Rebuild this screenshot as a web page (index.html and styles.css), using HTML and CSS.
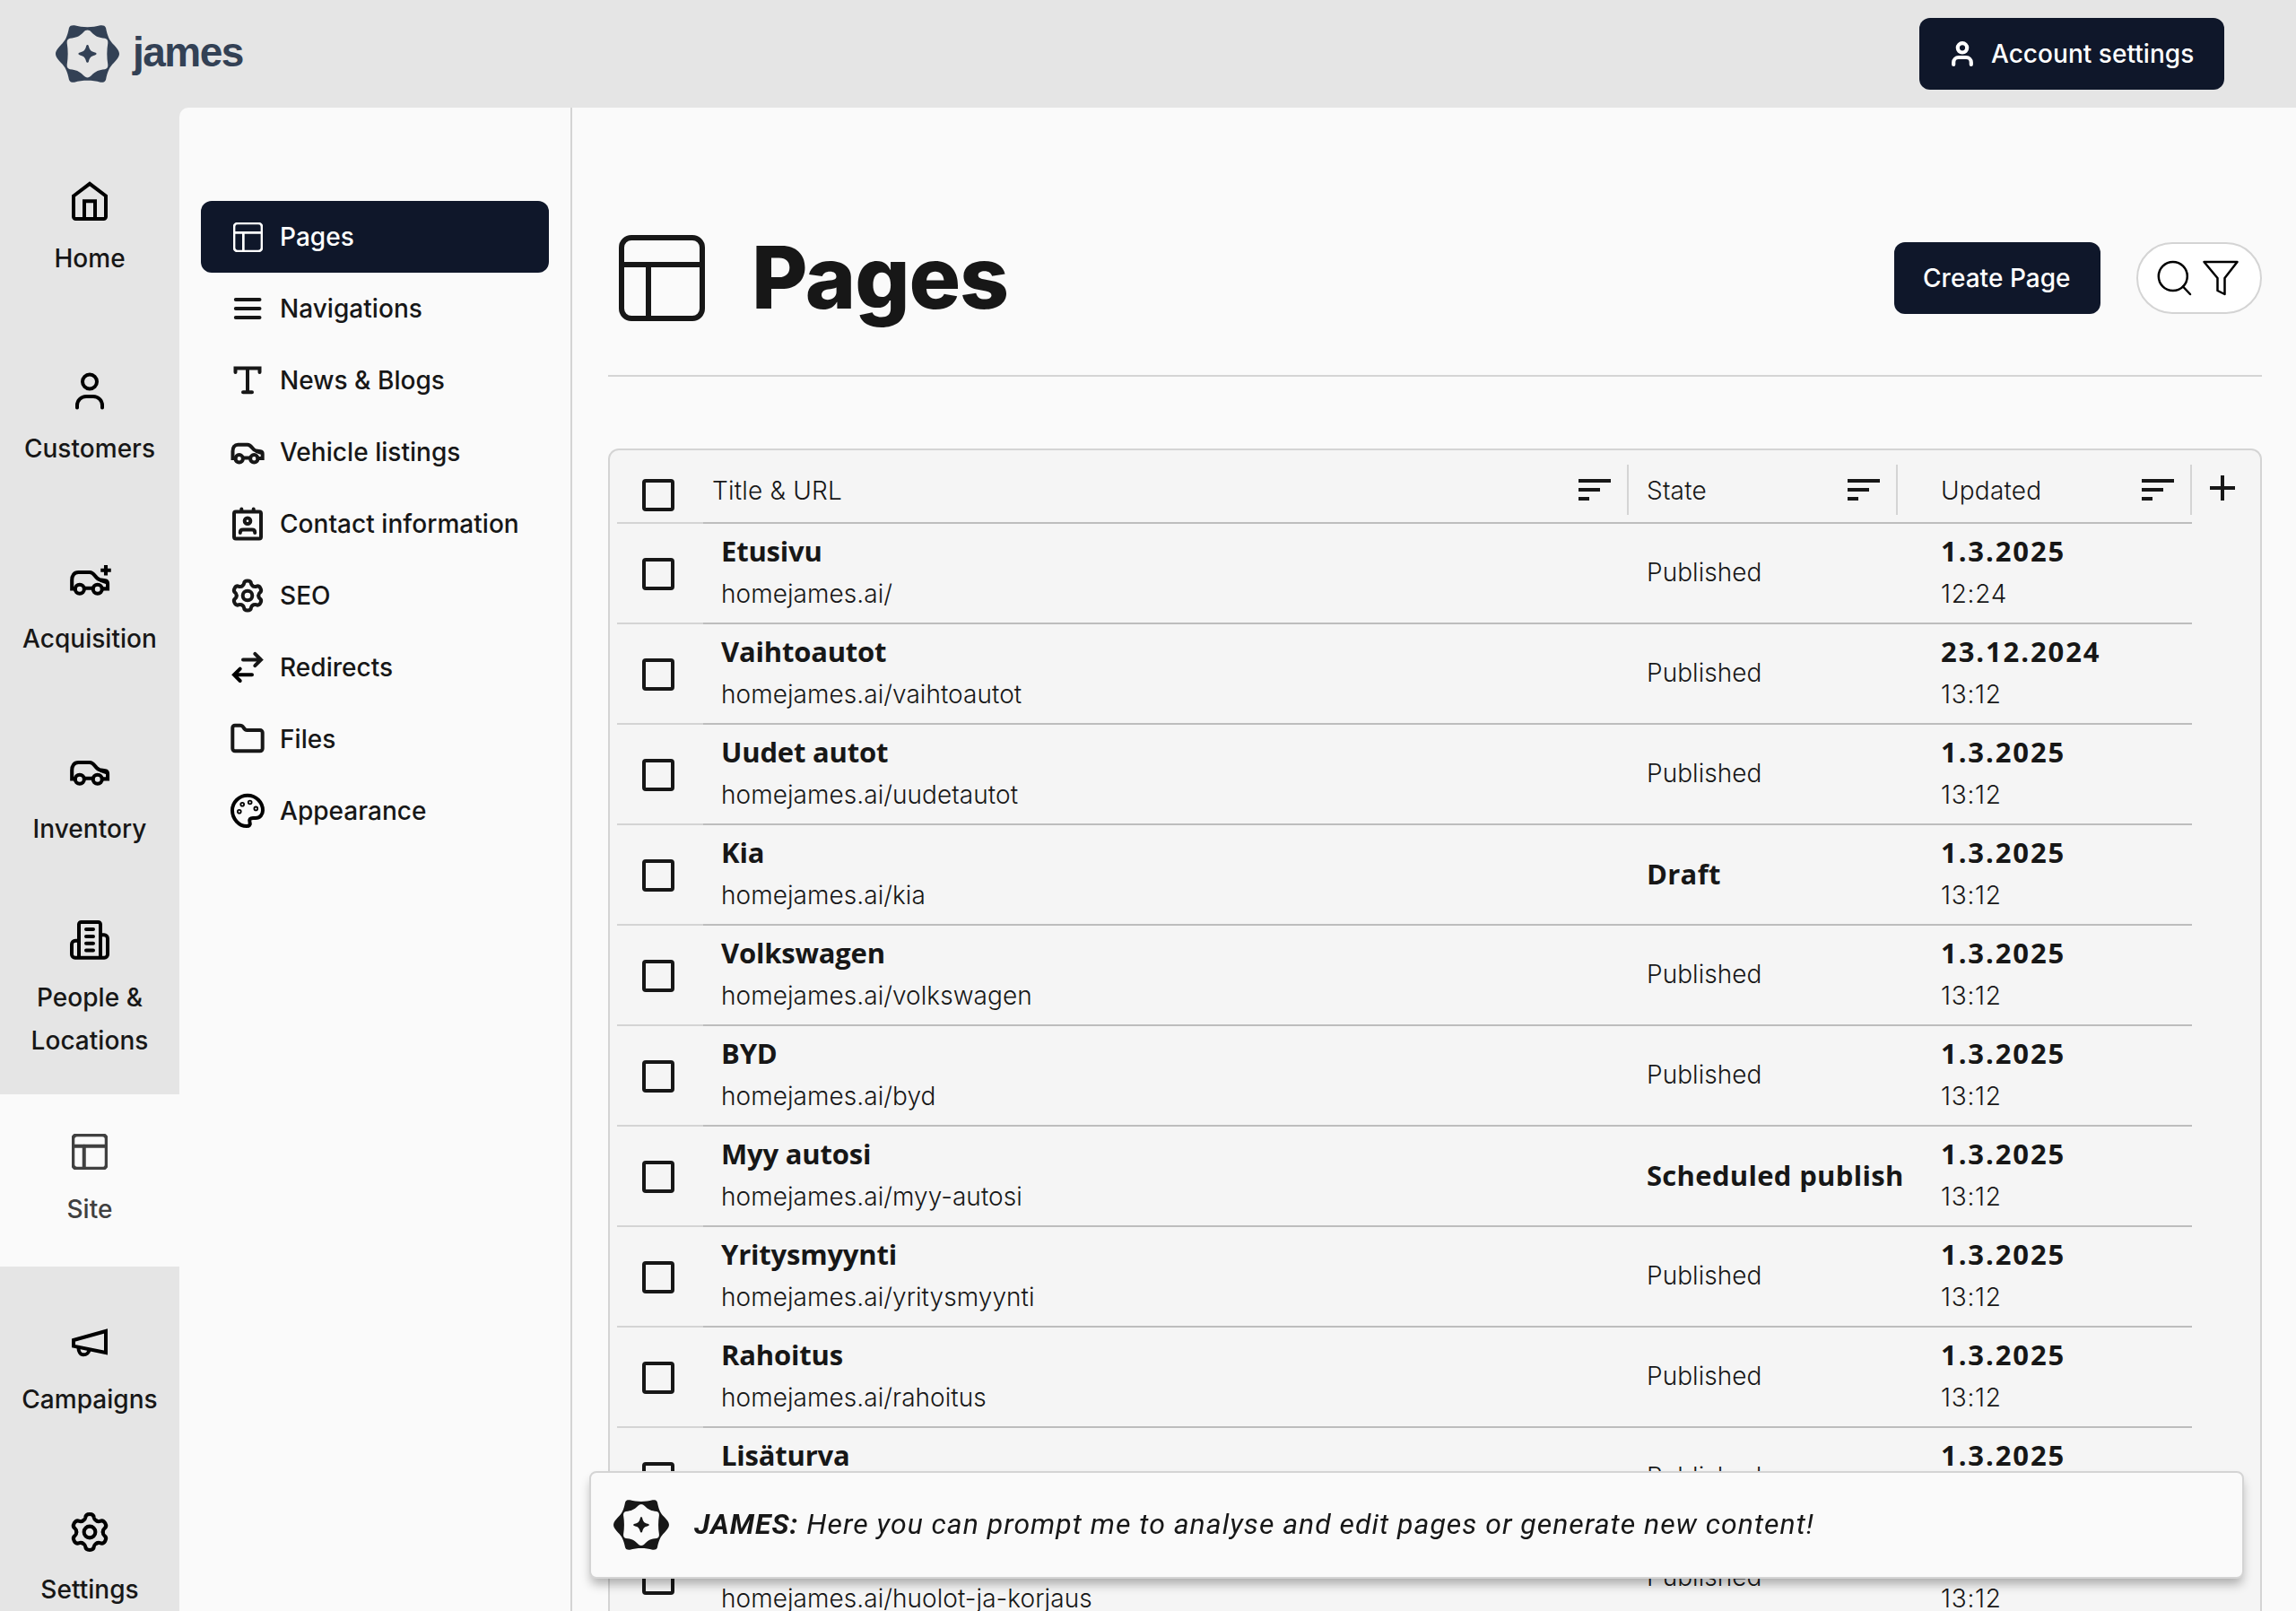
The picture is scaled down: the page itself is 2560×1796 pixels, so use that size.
FILE: index.html
```html
<!DOCTYPE html>
<html lang="en">
<head>
    <meta charset="UTF-8">
    <meta name="viewport" content="width=device-width, initial-scale=1.0">
    <title>James - Pages</title>
    <link rel="stylesheet" href="styles.css">
</head>
<body>

    <!-- Icon sprite -->
    <svg class="sprite" xmlns="http://www.w3.org/2000/svg">
        <symbol id="logo" viewBox="0 0 71 64">
            <path fill-rule="evenodd" d="M15 3C16 .5 18 0 21 .3C30 2.8 41 2.8 50 .3C53 0 55 .5 56 3C58 13 60 17 65 22C68 25.5 71 28.5 71 32C71 35.5 68 38.5 65 42C60 47 58 51 56 61C55 63.5 53 64 50 63.7C41 61.2 30 61.2 21 63.7C18 64 16 63.5 15 61C13 51 11 47 6 42C3 38.5 0 35.5 0 32C0 28.5 3 25.5 6 22C11 17 13 13 15 3ZM31 8C26 13 23 14 16 14.8C13.5 15.5 12.5 17 12.7 20C14 28 14 36 12.7 44C12.5 47 13.5 48.5 16 49.2C23 50 26 51 31 56C34 59.2 37 59.2 40 56C45 51 48 50 55 49.2C57.5 48.5 58.5 47 58.3 44C57 36 57 28 58.3 20C58.5 17 57.5 15.5 55 14.8C48 14 45 13 40 8C37 4.8 34 4.8 31 8Z"/>
            <path d="M35.5 22C36.3 22 36.7 22.6 36.9 23.6C38 28 39.5 29.5 43.9 30.6C46.2 31.2 46.2 32.8 43.9 33.4C39.5 34.5 38 36 36.9 40.4C36.5 42.3 34.5 42.3 34.1 40.4C33 36 31.5 34.5 27.1 33.4C24.8 32.8 24.8 31.2 27.1 30.6C31.5 29.5 33 28 34.1 23.6C34.3 22.6 34.7 22 35.5 22Z"/>
        </symbol>
        <symbol id="home" viewBox="0 0 48 48">
            <path d="M6 18.5L24 4.8L42 18.5V41.5A2.5 2.5 0 0 1 39.500 44H8.500A2.500 2.500 0 0 1 6 41.500Z"/>
            <path d="M18 44V24.300H30V44"/>
        </symbol>
        <symbol id="user" viewBox="0 0 48 48">
            <circle cx="24" cy="13.500" r="8"/>
            <path d="M10 42.500V40A10 10 0 0 1 20 30H28A10 10 0 0 1 38 40V42.500"/>
        </symbol>
        <symbol id="car" viewBox="0 0 40 40">
            <path d="M6.500 27H3.500V19C3.500 14.500 5.500 11.700 9.500 11.700H20C22.500 11.700 23.500 13 25 15C26.500 17 27.500 18.200 29.500 18.600L34.500 19.300C36.500 19.600 36.700 20.500 36.700 22V27H31.500M15 26.500H23M30 19L36 21"/>
            <circle cx="10.700" cy="27.300" r="4.200"/>
            <circle cx="27.300" cy="27.300" r="4.200"/>
        </symbol>
        <symbol id="building" viewBox="0 0 48 48">
            <path d="M12 43.700V6.500A2.500 2.500 0 0 1 14.500 4H33.500A2.500 2.500 0 0 1 36 6.500V43.700M12 24.700H8A4 4 0 0 0 4 28.700V40A3.700 3.700 0 0 0 7.700 43.700H40.300A3.700 3.700 0 0 0 44 40V22.300A4 4 0 0 0 40 18.300H36"/>
            <path d="M20 12H28M20 20H28M20 27.700H28M20 35.500H28"/>
        </symbol>
        <symbol id="layout" viewBox="0 0 96 96">
            <path d="M3 33H93"/>
            <rect x="3" y="3" width="90" height="90" rx="11"/>
            <path class="layout-stem" d="M33 33V93"/>
        </symbol>
        <symbol id="megaphone" viewBox="0 0 48 48">
            <path d="M6 22L42 12V36L6 28.700Z"/>
            <path d="M11.500 30.500C11.500 34.500 13.500 38.300 17 38.300C20.500 38.300 23 36 23.500 33"/>
        </symbol>
        <path id="tooth" d="M-6.200 -10.600C-4.700 -11.400 -4.200 -12 -4 -13.400C-3.800 -15.700 -2.700 -16.600 0 -16.600S3.800 -15.700 4 -13.400C4.200 -12 4.700 -11.400 6.200 -10.600"/>
        <symbol id="cog" viewBox="-20 -20 40 40">
            <use href="#tooth"/>
            <use href="#tooth" transform="rotate(60)"/>
            <use href="#tooth" transform="rotate(120)"/>
            <use href="#tooth" transform="rotate(180)"/>
            <use href="#tooth" transform="rotate(240)"/>
            <use href="#tooth" transform="rotate(300)"/>
            <circle r="5.300"/>
        </symbol>
        <symbol id="sort" viewBox="0 0 36 24">
            <path d="M0 2H36M0 12H24M0 22H12"/>
        </symbol>
    </svg>

    <header class="topbar">
        <a class="brand" href="#">
            <svg class="brand-mark"><use href="#logo"/></svg>
            <span class="brand-name">james</span>
        </a>
        <button class="btn btn-account">
            <svg class="icon-account" viewBox="0 0 24 28">
                <circle cx="12" cy="7.300" r="5.200"/>
                <path d="M2.200 26V23.500A5.500 5.500 0 0 1 7.700 18H16.300A5.500 5.500 0 0 1 21.800 23.500V26"/>
            </svg>
            Account settings
        </button>
    </header>

    <div class="layout">
        <nav class="sidebar">
            <a class="side-item" href="#"><svg class="icon"><use href="#home"/></svg>Home</a>
            <a class="side-item" href="#"><svg class="icon"><use href="#user"/></svg>Customers</a>
            <a class="side-item" href="#">
                <svg class="icon icon-car" viewBox="0 0 40 40"><use href="#car"/><path class="plus" d="M35 5V14.600M30.200 9.800H39.800"/></svg>
                Acquisition
            </a>
            <a class="side-item" href="#"><svg class="icon icon-car"><use href="#car"/></svg>Inventory</a>
            <a class="side-item side-item-tall" href="#"><svg class="icon"><use href="#building"/></svg>People &amp;<br>Locations</a>
            <a class="side-item active" href="#"><svg class="icon icon-site"><use href="#layout"/></svg>Site</a>
            <a class="side-item" href="#"><svg class="icon"><use href="#megaphone"/></svg>Campaigns</a>
            <a class="side-item" href="#"><svg class="icon icon-car"><use href="#cog"/></svg>Settings</a>
        </nav>

        <div class="content">
            <nav class="submenu">
                <a class="sub-item active" href="#"><svg class="icon icon-pages"><use href="#layout"/></svg>Pages</a>
                <a class="sub-item" href="#">
                    <svg class="icon" viewBox="0 0 40 40"><path d="M6.800 10H33.500M6.800 20H33.500M6.800 30H33.500"/></svg>
                    Navigations
                </a>
                <a class="sub-item" href="#">
                    <svg class="icon" viewBox="0 0 40 40"><path d="M6.500 11V6.500H33.500V11M20 6.500V33.300M15 33.300H25"/></svg>
                    News &amp; Blogs
                </a>
                <a class="sub-item" href="#"><svg class="icon"><use href="#car"/></svg>Vehicle listings</a>
                <a class="sub-item" href="#">
                    <svg class="icon" viewBox="0 0 40 40">
                        <rect x="5" y="6.500" width="30" height="30" rx="2"/>
                        <path d="M13.300 3.500V6M26.700 3.500V6M11.800 30V29.500C11.800 27.500 13 26.500 15 26.500H25C27 26.500 28.200 27.500 28.200 29.500V30"/>
                        <circle cx="20" cy="16.700" r="3.300"/>
                    </svg>
                    Contact information
                </a>
                <a class="sub-item" href="#"><svg class="icon"><use href="#cog"/></svg>SEO</a>
                <a class="sub-item" href="#">
                    <svg class="icon" viewBox="0 0 40 40">
                        <path d="M15 11.500H35M28.300 4.800L35 11.500L28.300 18.200"/>
                        <path class="ink-black" d="M25 28.300H5M11.700 21.600L5 28.300L11.700 35"/>
                    </svg>
                    Redirects
                </a>
                <a class="sub-item" href="#">
                    <svg class="icon" viewBox="0 0 40 40"><path d="M3.300 7.300A2.600 2.600 0 0 1 5.900 4.700H11.500C13.500 4.700 14.500 5.500 15.500 7C16.500 9 17.500 10 19.500 10H34A2.700 2.700 0 0 1 36.700 12.700V30.600A2.700 2.700 0 0 1 34 33.300H6A2.700 2.700 0 0 1 3.300 30.600Z"/></svg>
                    Files
                </a>
                <a class="sub-item" href="#">
                    <svg class="icon ink-black" viewBox="0 0 40 40">
                        <path d="M20 2.800C10.500 2.800 3 10.500 3 19.500C3 29 10.500 37 19 37C22 37 23.500 35.500 22.500 32.500C21.500 29.500 23 28 26 28H29C34 28 37 24 37 19.500C37 10.500 29.500 2.800 20 2.800Z"/>
                        <g class="palette-dots">
                            <circle cx="10.800" cy="20.700" r="1.900"/>
                            <circle cx="14.200" cy="12.700" r="1.900"/>
                            <circle cx="22.700" cy="10.500" r="1.900"/>
                            <circle cx="29.300" cy="17.400" r="1.900"/>
                        </g>
                    </svg>
                    Appearance
                </a>
            </nav>

            <main class="main">
                <div class="page-head">
                    <svg class="page-icon"><use href="#layout"/></svg>
                    <h1>Pages</h1>
                    <button class="btn btn-create">Create Page</button>
                    <div class="tools">
                        <svg class="tool" viewBox="0 0 40 40"><circle cx="16.800" cy="18" r="16"/><path d="M28 29.500L36 38"/></svg>
                        <svg class="tool" viewBox="0 0 40 40"><path d="M1.500 2H38.500L24.500 20V38L16.500 34V20Z"/></svg>
                    </div>
                </div>

                <div class="table">
                    <div class="row row-head">
                        <span class="cell cell-check"><i class="checkbox"></i></span>
                        <span class="cell cell-title">Title &amp; URL <svg class="sort"><use href="#sort"/></svg></span>
                        <span class="cell cell-state">State <svg class="sort"><use href="#sort"/></svg></span>
                        <span class="cell cell-date">Updated <svg class="sort"><use href="#sort"/></svg></span>
                        <svg class="add" viewBox="0 0 28 28"><path d="M14 0V28M0 14H28"/></svg>
                    </div>
                    <div class="row">
                        <span class="cell cell-check"><i class="checkbox"></i></span>
                        <span class="cell cell-title"><b>Etusivu</b>homejames.ai/</span>
                        <span class="cell cell-state">Published</span>
                        <span class="cell cell-date"><b>1.3.2025</b>12:24</span>
                    </div>
                    <div class="row">
                        <span class="cell cell-check"><i class="checkbox"></i></span>
                        <span class="cell cell-title"><b>Vaihtoautot</b>homejames.ai/vaihtoautot</span>
                        <span class="cell cell-state">Published</span>
                        <span class="cell cell-date"><b>23.12.2024</b>13:12</span>
                    </div>
                    <div class="row">
                        <span class="cell cell-check"><i class="checkbox"></i></span>
                        <span class="cell cell-title"><b>Uudet autot</b>homejames.ai/uudetautot</span>
                        <span class="cell cell-state">Published</span>
                        <span class="cell cell-date"><b>1.3.2025</b>13:12</span>
                    </div>
                    <div class="row">
                        <span class="cell cell-check"><i class="checkbox"></i></span>
                        <span class="cell cell-title"><b>Kia</b>homejames.ai/kia</span>
                        <span class="cell cell-state"><b>Draft</b></span>
                        <span class="cell cell-date"><b>1.3.2025</b>13:12</span>
                    </div>
                    <div class="row">
                        <span class="cell cell-check"><i class="checkbox"></i></span>
                        <span class="cell cell-title"><b>Volkswagen</b>homejames.ai/volkswagen</span>
                        <span class="cell cell-state">Published</span>
                        <span class="cell cell-date"><b>1.3.2025</b>13:12</span>
                    </div>
                    <div class="row">
                        <span class="cell cell-check"><i class="checkbox"></i></span>
                        <span class="cell cell-title"><b>BYD</b>homejames.ai/byd</span>
                        <span class="cell cell-state">Published</span>
                        <span class="cell cell-date"><b>1.3.2025</b>13:12</span>
                    </div>
                    <div class="row">
                        <span class="cell cell-check"><i class="checkbox"></i></span>
                        <span class="cell cell-title"><b>Myy autosi</b>homejames.ai/myy-autosi</span>
                        <span class="cell cell-state"><b>Scheduled publish</b></span>
                        <span class="cell cell-date"><b>1.3.2025</b>13:12</span>
                    </div>
                    <div class="row">
                        <span class="cell cell-check"><i class="checkbox"></i></span>
                        <span class="cell cell-title"><b>Yritysmyynti</b>homejames.ai/yritysmyynti</span>
                        <span class="cell cell-state">Published</span>
                        <span class="cell cell-date"><b>1.3.2025</b>13:12</span>
                    </div>
                    <div class="row">
                        <span class="cell cell-check"><i class="checkbox"></i></span>
                        <span class="cell cell-title"><b>Rahoitus</b>homejames.ai/rahoitus</span>
                        <span class="cell cell-state">Published</span>
                        <span class="cell cell-date"><b>1.3.2025</b>13:12</span>
                    </div>
                    <div class="row">
                        <span class="cell cell-check"><i class="checkbox"></i></span>
                        <span class="cell cell-title"><b>Lisäturva</b>homejames.ai/lisaturva</span>
                        <span class="cell cell-state">Published</span>
                        <span class="cell cell-date"><b>1.3.2025</b>13:12</span>
                    </div>
                    <div class="row">
                        <span class="cell cell-check"><i class="checkbox"></i></span>
                        <span class="cell cell-title"><b>Huolto ja korjaus</b>homejames.ai/huolot-ja-korjaus</span>
                        <span class="cell cell-state">Published</span>
                        <span class="cell cell-date"><b>1.3.2025</b>13:12</span>
                    </div>
                </div>
            </main>
        </div>
    </div>

    <!-- Assistant prompt, floats over the table -->
    <div class="prompt">
        <svg class="prompt-logo"><use href="#logo"/></svg>
        <p><strong>JAMES:</strong> Here you can prompt me to analyse and edit pages or generate new content!</p>
    </div>

</body>
</html>
```

FILE: styles.css
```css
:root {
    --ink: #171717;
    --navy: #0f172a;
    --slate: #334155;
    --chrome: #e5e5e5;
    --surface: #fafafa;
    --table-bg: #f5f5f5;
    --line: #d4d4d4;
    --line-dark: #bdbdbd;
}

* {
    box-sizing: border-box;
}

body {
    margin: 0;
    height: 100vh;
    overflow: hidden;
    font-family: Inter, "Liberation Sans", sans-serif;
    font-size: 28px;
    font-weight: 500;
    letter-spacing: 0.04px;
    color: var(--ink);
    background-color: var(--chrome);
}

a {
    color: inherit;
    text-decoration: none;
}

svg {
    flex: none;
    fill: none;
    stroke: currentColor;
    stroke-width: 4;
    stroke-linecap: round;
    overflow: visible;
}

.sprite {
    position: absolute;
    width: 0;
    height: 0;
}

.ink-black {
    stroke: #000;
}

/* Top bar */
.topbar {
    display: flex;
    justify-content: space-between;
    align-items: center;
    height: 120px;
    padding: 0 80px 0 62px;
}

.brand {
    display: flex;
    align-items: center;
    gap: 15px;
    color: var(--slate);
}

.brand-mark {
    width: 71px;
    height: 64px;
    fill: currentColor;
    stroke: none;
}

.brand-name {
    font-family: "Liberation Sans", Arial, sans-serif;
    font-size: 46px;
    font-weight: bold;
    letter-spacing: -1.5px;
    line-height: 64px;
    margin-top: -5px;
}

.btn {
    display: flex;
    align-items: center;
    height: 80px;
    border: none;
    border-radius: 12px;
    background-color: var(--navy);
    color: #fff;
    font: inherit;
    letter-spacing: inherit;
    white-space: nowrap;
}

.btn-account {
    width: 340px;
    padding: 0 0 0 36px;
    gap: 20px;
}

.icon-account {
    width: 24px;
    height: 28px;
    stroke-width: 4.2;
}

/* Left navigation */
.layout {
    display: flex;
    height: calc(100vh - 120px);
}

.sidebar {
    flex: none;
    display: flex;
    flex-direction: column;
    gap: 20px;
    width: 200px;
    padding-top: 40px;
    overflow: hidden;
}

.side-item {
    flex: none;
    display: flex;
    flex-direction: column;
    align-items: center;
    height: 192px;
    padding-top: 40px;
    line-height: 48px;
    text-align: center;
}

.side-item .icon {
    width: 48px;
    height: 48px;
    margin-bottom: 16px;
    color: #000;
}

.side-item .icon-car {
    stroke-width: 3.4;
}

.side-item .plus {
    stroke-linecap: butt;
}

.side-item-tall {
    display: block;
    padding-top: 16px;
}

.side-item-tall .icon {
    display: block;
    margin: 0 auto 16px;
}

.side-item.active {
    background-color: var(--surface);
    color: #404040;
}

.side-item .icon-site {
    width: 40px;
    height: 40px;
    margin: 4px 0 20px;
    color: #404040;
    stroke-width: 9.6;
}

.icon-site .layout-stem {
    stroke: #000;
}

/* Content area */
.content {
    flex: 1;
    display: flex;
    min-width: 0;
    background-color: var(--surface);
    border-top-left-radius: 10px;
}

.submenu {
    flex: none;
    width: 438px;
    padding: 104px 24px 0;
    border-right: 2px solid var(--line);
}

.sub-item {
    display: flex;
    align-items: center;
    gap: 16px;
    width: 388px;
    height: 80px;
    padding-left: 32px;
    border-radius: 12px;
    white-space: nowrap;
}

.sub-item .icon {
    width: 40px;
    height: 40px;
}

.sub-item .icon-pages {
    width: 33px;
    height: 33px;
    margin: 0 3px 0 4px;
    stroke-width: 7.8;
}

.sub-item.active {
    background-color: var(--navy);
    color: #fff;
}

.main {
    flex: 1;
    min-width: 0;
    padding: 0 38px 0 40px;
    overflow: hidden;
}

.page-head {
    display: flex;
    align-items: center;
    height: 300px;
    padding: 142px 0 60px 12px;
    border-bottom: 2px solid var(--line);
}

.page-icon {
    width: 96px;
    height: 96px;
    stroke-width: 6;
}

h1 {
    flex: 1;
    margin: -2px 0 0 52px;
    font-size: 96px;
    font-weight: 800;
    line-height: 96px;
    letter-spacing: -1.1px;
}

.btn-create {
    width: 230px;
    padding: 0 0 0 32px;
}

.tools {
    display: flex;
    align-items: center;
    gap: 10px;
    width: 140px;
    height: 80px;
    margin-left: 40px;
    padding-left: 22px;
    border: 2px solid var(--line);
    border-radius: 40px;
    background-color: #fff;
    color: #000;
}

.tool {
    width: 40px;
    height: 40px;
    stroke-width: 2.5;
    stroke-linejoin: round;
}

/* Pages table */
.table {
    height: 1400px;
    margin-top: 80px;
    padding-left: 8px;
    border: 2px solid var(--line);
    border-radius: 12px;
    background-color: var(--table-bg);
    font-weight: 350;
    letter-spacing: 0.05px;
}

.row {
    display: grid;
    grid-template-columns: 96px 1032px 300px 328px auto;
    height: 112px;
}

.row-head {
    height: 82px;
}

.cell {
    display: flex;
    flex-direction: column;
    justify-content: center;
    padding-bottom: 4px;
    line-height: 46px;
    border-bottom: 2px solid var(--line-dark);
    white-space: nowrap;
}

.cell b {
    font-family: "Open Sans", "Noto Sans", sans-serif;
    font-size: 31px;
    font-weight: 700;
    line-height: 49px;
    letter-spacing: -0.2px;
}

.cell-check {
    padding: 2px 0 0 28px;
    border-color: var(--line);
}

.checkbox {
    width: 36px;
    height: 36px;
    border: 4px solid var(--ink);
    border-radius: 4px;
}

.cell-title {
    padding-left: 20px;
}

.cell-state {
    padding: 0 0 2px 20px;
}

.cell-state b {
    letter-spacing: 0.3px;
}

.cell-date {
    padding-left: 48px;
    letter-spacing: 0.7px;
}

.cell-date b {
    letter-spacing: 1.9px;
}

.row-head .cell {
    position: relative;
    flex-direction: row;
    align-items: center;
    justify-content: space-between;
    padding-top: 9px;
    padding-right: 20px;
    padding-bottom: 0;
    letter-spacing: 0.2px;
}

.row-head .cell-check {
    justify-content: flex-start;
    padding-top: 20px;
}

.row-head .cell-title {
    padding-left: 10px;
}

/* Column separators */
.row-head .cell:not(.cell-check)::after {
    content: "";
    position: absolute;
    top: 16px;
    right: 0;
    width: 2px;
    height: 56px;
    background-color: var(--line);
}

.sort {
    width: 36px;
    height: 24px;
    margin-top: -2px;
    stroke-linecap: butt;
}

.add {
    width: 28px;
    height: 28px;
    margin: 28px 0 0 20px;
    stroke-linecap: butt;
}

.palette-dots {
    stroke-width: 1.8;
}

/* Assistant prompt */
.prompt {
    position: fixed;
    left: 657px;
    bottom: 36px;
    display: flex;
    align-items: center;
    gap: 28px;
    width: 1845px;
    height: 120px;
    padding-left: 25px;
    border: 2px solid var(--line);
    border-radius: 8px;
    background-color: var(--surface);
    box-shadow: 0 8px 12px -2px rgba(0, 0, 0, 0.3);
    font-family: Roboto, sans-serif;
    font-size: 32px;
    font-style: italic;
    font-weight: 400;
    letter-spacing: 1px;
}

.prompt p {
    margin: -3px 0 0;
}

.prompt-logo {
    width: 62px;
    height: 56px;
    fill: currentColor;
    stroke: none;
}
```
